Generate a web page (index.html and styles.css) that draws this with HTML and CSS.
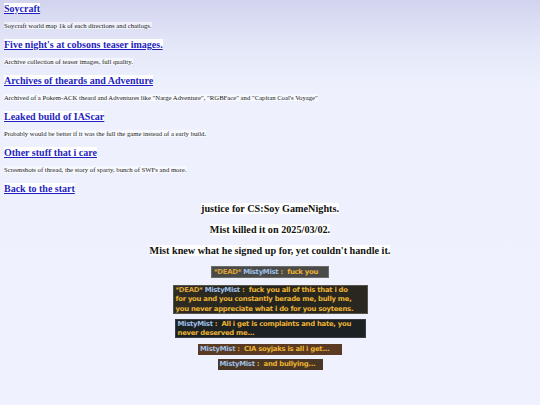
FILE: index.html
```html
<!DOCTYPE html>
<html>
<head>
<meta charset="utf-8">
<title>Soy archives</title>
<link rel="stylesheet" href="styles.css">
</head>
<body>
<main class="page">
  <section class="entry">
    <h2 class="title"><a href="#" class="hl">Soycraft</a></h2>
    <p class="desc"><span class="hl-soft">Soycraft world map 1k of each directions and chatlogs.</span></p>
  </section>
  <section class="entry">
    <h2 class="title"><a href="#" class="hl">Five night's at cobsons teaser images.</a></h2>
    <p class="desc"><span class="hl-soft">Archive collection of teaser images, full quality.</span></p>
  </section>
  <section class="entry">
    <h2 class="title"><a href="#" class="hl">Archives of theards and Adventure</a></h2>
    <p class="desc"><span class="hl-soft">Archived of a Pokem-ACK theard and Adventures like "Narge Adventure", "RGBFace" and "Capitan Coal's Voyage"</span></p>
  </section>
  <section class="entry">
    <h2 class="title"><a href="#" class="hl">Leaked build of IAScar</a></h2>
    <p class="desc"><span class="hl-soft">Probably would be better if it was the full the game instead of a early build.</span></p>
  </section>
  <section class="entry">
    <h2 class="title"><a href="#" class="hl">Other stuff that i care</a></h2>
    <p class="desc"><span class="hl-soft">Screenshots of thread, the story of sparty, bunch of SWFs and more.</span></p>
  </section>
  <section class="entry last">
    <h2 class="title"><a href="#" class="hl">Back to the start</a></h2>
  </section>

  <div class="memorial">
    <p class="line"><span class="hl">justice for CS:Soy GameNights.</span></p>
    <p class="line"><span class="hl">Mist killed it on 2025/03/02.</span></p>
    <p class="line"><span class="hl">Mist knew what he signed up for, yet couldn't handle it.</span></p>
  </div>

  <div class="chats">
    <div class="chat c1"><span class="dead">*DEAD*</span> <span class="name">MistyMist</span><span class="msg"> :&nbsp; fuck you</span></div>
    <div class="chat c2"><span class="dead">*DEAD*</span> <span class="name">MistyMist</span><span class="msg"> :&nbsp; fuck you all of this that i do<br>for you and you constantly berade me, bully me,<br>you never appreciate what i do for you soyteens.</span></div>
    <div class="chat c3"><span class="name">MistyMist</span><span class="msg"> :&nbsp; All i get is complaints and hate, you<br>never deserved me...</span></div>
    <div class="chat c4"><span class="name">MistyMist</span><span class="msg"> :&nbsp; CIA soyjaks is all i get...</span></div>
    <div class="chat c5"><span class="name">MistyMist</span><span class="msg"> :&nbsp; and bullying...</span></div>
  </div>
</main>
</body>
</html>
```
FILE: styles.css
```css
html, body {
  margin: 0;
  padding: 0;
}
body {
  width: 540px;
  min-height: 405px;
  background: linear-gradient(#d2d4ef 0px, #e4e7f8 45px, #eef1fd 90px, #eff2fe 405px);
  font-family: "Liberation Serif", "Times New Roman", serif;
  color: #222;
}
.page {
  padding: 3px 4px 0 4px;
}
.title {
  margin: 0;
  font-size: 10px;
  line-height: 12px;
  font-weight: bold;
}
.title a {
  color: #1f1fbf;
  text-decoration: underline;
}
.hl {
  background: #ffffff;
}
.hl-soft {
  background: rgba(255, 255, 255, 0.55);
}
.desc {
  margin: 7px 0 9px 0;
  font-size: 6.7px;
  line-height: 8px;
  color: #222;
}
.memorial {
  margin-top: 8px;
  display: flex;
  flex-direction: column;
  align-items: center;
  gap: 9px;
}
.line {
  margin: 0;
  font-size: 10.2px;
  line-height: 12px;
  font-weight: bold;
  color: #111;
  text-align: center;
}
.chats {
  margin-top: 9px;
  display: flex;
  flex-direction: column;
  align-items: center;
  font-family: "DejaVu Sans", Verdana, sans-serif;
  font-weight: bold;
  font-size: 6.9px;
  letter-spacing: -0.28px;
  line-height: 9.4px;
}
.chat {
  box-sizing: border-box;
  white-space: nowrap;
  overflow: hidden;
  padding: 0 2px;
  text-align: left;
}
.dead { color: #dca235; }
.name { color: #9fc0e8; }
.msg { color: #ebb233; }
.c1 {
  width: 118px;
  height: 12px;
  line-height: 11px;
  background: #4a4a48;
  border: 1px solid #6a6a68;
}
.c2 {
  margin-top: 7px;
  width: 195px;
  height: 29px;
  background: linear-gradient(90deg, #2e2c22, #24241e 50%, #2a2820);
  border: 1px solid #56544a;
}
.c3 {
  margin-top: 5px;
  width: 191px;
  height: 19px;
  background: #1c2124;
  border: 1px solid #3a3e40;
}
.c4 {
  margin-top: 6px;
  width: 144px;
  height: 11px;
  line-height: 11px;
  background: #5a3a22;
}
.c5 {
  margin-top: 4px;
  width: 105px;
  height: 11px;
  line-height: 11px;
  background: #4a3624;
}
```
